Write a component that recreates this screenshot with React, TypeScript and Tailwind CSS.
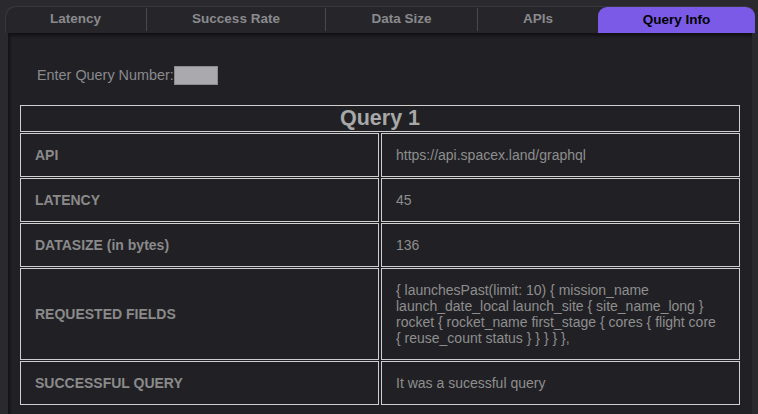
import React from "react";

const tabs = [
  { label: "Latency", w: "w-[141px]" },
  { label: "Success Rate", w: "w-[179px]" },
  { label: "Data Size", w: "w-[152px]" },
  { label: "APIs", w: "w-[121px]" },
];

const rows: { k: string; v: string; tall?: boolean }[] = [
  { k: "API", v: "https://api.spacex.land/graphql" },
  { k: "LATENCY", v: "45" },
  { k: "DATASIZE (in bytes)", v: "136" },
  {
    k: "REQUESTED FIELDS",
    v: "{ launchesPast(limit: 10) { mission_name launch_date_local launch_site { site_name_long } rocket { rocket_name first_stage { cores { flight core { reuse_count status } } } } },",
    tall: true,
  },
  { k: "SUCCESSFUL QUERY", v: "It was a sucessful query" },
];

export default function App() {
  return (
    <div
      className="w-[758px] h-[414px] overflow-hidden bg-[#2a2a2e] pt-[6px] pl-[5px] pr-[3px]"
      style={{ fontFamily: '"Liberation Sans", Arial, sans-serif' }}
    >
      <div className="flex h-[27px] bg-[#26262a] rounded-t-[10px] shadow-[inset_1px_1px_0_#38383c]">
        {tabs.map((t, i) => (
          <div
            key={t.label}
            className={`${t.w} flex items-center justify-center text-[13.5px] font-bold text-[#8a8a8e] ${
              i > 0 ? "border-l border-[#48484c]" : ""
            } my-[2px]`}
          >
            {t.label}
          </div>
        ))}
        <div className="flex-1 flex items-center justify-center mt-[1px] rounded-t-[9px] bg-[#7a5ae6] text-[13.5px] font-bold text-black">
          Query Info
        </div>
      </div>
      <div className="ml-[3px] mr-[3px] h-[400px] bg-[#212125] shadow-[inset_2px_3px_3px_rgba(0,0,0,0.45)] pl-[12px] pr-[11px]">
        <div className="flex items-center h-[72px] pl-[17px] pt-[13px] text-[14.4px] text-[#8a8a8e]">
          <span>Enter Query Number:</span>
          <div className="w-[44px] h-[19px] bg-[#a9a9ae] border border-[#8c8c90]" />
        </div>
        <div className="flex flex-col gap-[1px] w-[720px]">
          <div className="h-[27px] border border-[#cfcfcf] flex items-center justify-center text-[21.5px] font-bold text-[#a8a8a8] leading-none">
            Query 1
          </div>
          {rows.map((r) => (
            <div key={r.k} className="flex gap-[2px]">
              <div
                className={`w-[359px] border border-[#cfcfcf] flex items-center px-[14px] text-[14px] font-bold text-[#8a8a8a] leading-[16px] ${
                  r.tall ? "h-[92px]" : "h-[44px]"
                }`}
              >
                {r.k}
              </div>
              <div
                className={`w-[359px] border border-[#cfcfcf] flex items-center pl-[14px] pr-[18px] text-[14px] text-[#8e8e8e] leading-[16px] ${
                  r.tall ? "h-[92px]" : "h-[44px]"
                }`}
              >
                {r.v}
              </div>
            </div>
          ))}
        </div>
      </div>
    </div>
  );
}
